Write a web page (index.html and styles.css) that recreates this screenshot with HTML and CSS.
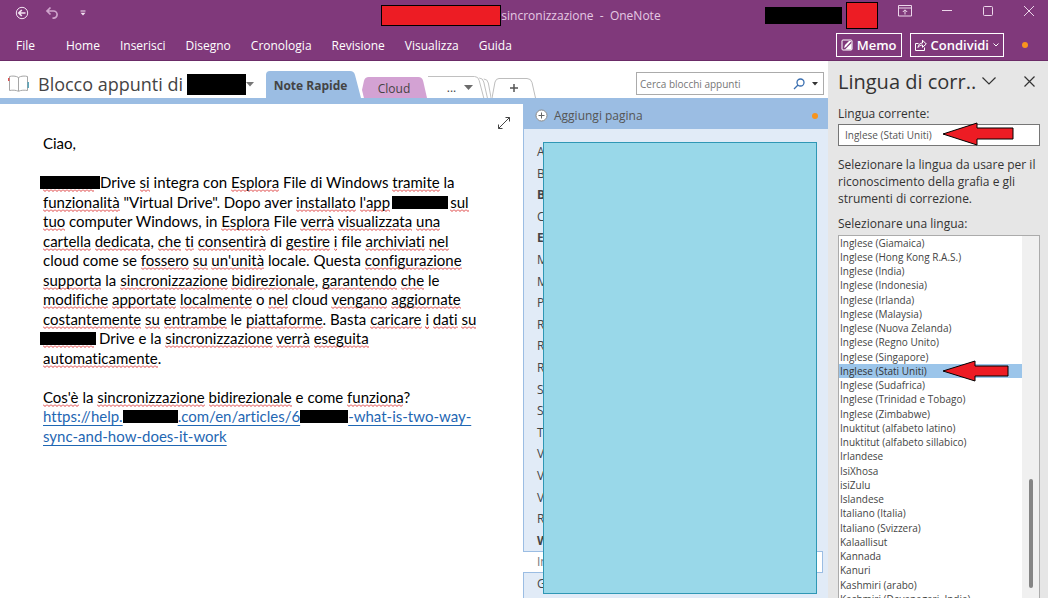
FILE: index.html
```
<!DOCTYPE html>
<html lang="it">

<head>
    <meta charset="UTF-8" />
    <meta name="viewport" content="width=device-width, initial-scale=1.0" />
    <title>sincronizzazione - OneNote</title>
    <link rel="stylesheet" href="styles.css">
</head>

<body>
    <header class="app-header">
        <div class="title-bar">
            <div class="quick-access">
                <button type="button" aria-label="Indietro">
                    <svg width="14" height="14" viewBox="0 0 14 14" fill="none" stroke="#f3e3f2">
                        <circle cx="7" cy="7" r="5.7" />
                        <path d="M10.5 7H4M6.8 4L3.8 7l3 3" stroke-width="1.7" />
                    </svg>
                </button>
                <button type="button" aria-label="Annulla">
                    <svg width="14" height="14" viewBox="0 0 14 14" fill="none" stroke="#cfa4cc" stroke-width="1.7">
                        <path d="M5.5 1.5L2 5l3.500 3.500M2 5h6.500a3.500 3.500 0 0 1 0 7.200H7.500" />
                    </svg>
                </button>
                <button type="button" aria-label="Personalizza">
                    <svg width="6" height="6" viewBox="0 0 6 6">
                        <path d="M.5 1h5" stroke="#f3e3f2" />
                        <path d="M.5 2.700h5L3 5.500z" fill="#f3e3f2" />
                    </svg>
                </button>
            </div>
            <div class="doc-title">
                <span class="mask-red"></span>
                <span>sincronizzazione&nbsp; - &nbsp;OneNote</span>
            </div>
            <div class="window-controls">
                <span class="mask-user"></span>
                <span class="mask-avatar"></span>
                <button type="button" aria-label="Barra multifunzione">
                    <svg width="14" height="12" viewBox="0 0 14 12" fill="none" stroke="#ecd6ea">
                        <path d="M.5.500h13v10.500H.500zM.500 3h13M7 9.500V5M4.800 7L7 4.800 9.200 7" />
                    </svg>
                </button>
                <button type="button" aria-label="Riduci">
                    <svg width="12" height="12" viewBox="0 0 12 12"><path d="M1 5.500h10" stroke="#ecd6ea" /></svg>
                </button>
                <button type="button" aria-label="Ingrandisci">
                    <svg width="12" height="12" viewBox="0 0 12 12"><rect x="1.500" y="1.500" width="9" height="9" rx="1" fill="none" stroke="#ecd6ea" /></svg>
                </button>
                <button type="button" aria-label="Chiudi">
                    <svg width="12" height="12" viewBox="0 0 12 12"><path d="M1 1l10 10M11 1L1 11" stroke="#ecd6ea" /></svg>
                </button>
            </div>
        </div>
        <div class="menu-bar">
            <nav>
                <a href="#">File</a>
                <a href="#">Home</a>
                <a href="#">Inserisci</a>
                <a href="#">Disegno</a>
                <a href="#">Cronologia</a>
                <a href="#">Revisione</a>
                <a href="#">Visualizza</a>
                <a href="#">Guida</a>
            </nav>
            <div class="actions">
                <button type="button" class="outline-btn">
                    <svg width="12" height="12" viewBox="0 0 12 12">
                        <rect x="1" y="1" width="10" height="10" rx="1" fill="none" stroke="#fff" />
                        <path d="M4 10.500L10.500 4v6.500zM3 9l1-3 4-4h2.500L5 8z" fill="#fff" />
                    </svg>
                    Memo
                </button>
                <button type="button" class="outline-btn">
                    <svg width="12" height="12" viewBox="0 0 12 12" fill="none" stroke="#fff">
                        <path d="M3.500 4.500h-3v7h9V8.500" />
                        <path d="M3 8.500c.3-3 2-4.500 4.500-4.500V1.200L11.300 5 7.500 8.300V6C5.500 6 4 6.800 3 8.500z" />
                    </svg>
                    Condividi
                    <svg width="6" height="6" viewBox="0 0 6 6"><path d="M.5 1.500L3 4l2.500-2.500" fill="none" stroke="#fff" /></svg>
                </button>
                <span class="dot"></span>
            </div>
        </div>
    </header>

    <div class="workspace">
        <div class="notebook">
            <div class="tab-row">
                <button type="button" class="notebook-name">
                    <svg width="21" height="18" viewBox="0 0 21 18" fill="none" stroke="#a6a6a6">
                        <path d="M10.500 2.500C8 .8 4 .8 1.500 1.500v14c3-.6 6.500-.4 9 .8 2.500-1.200 6-1.400 9-.8v-14c-2.500-.7-6.500-.7-9 1zM10.500 2.500v13.500" />
                        <path d="M.7 3v3" stroke="#e04f4f" stroke-width="1.400" />
                        <path d="M20.200 7v6" stroke="#4d9db5" stroke-width="1.400" />
                    </svg>
                    <span class="name">Blocco appunti di</span>
                    <span class="mask-name"></span>
                    <svg width="8" height="5" viewBox="0 0 8 5"><path d="M0 0h8L4 4.500z" fill="#767676" /></svg>
                </button>
                <div class="tabs">
                    <button type="button" class="tab tab-active">
                        <svg class="shape" viewBox="0 0 97 28" preserveAspectRatio="none"><path d="M1 28V5q0-4 4-4h80q4 0 5 4l6 23z" fill="#9bbde3" /></svg>
                        <span>Note Rapide</span>
                    </button>
                    <button type="button" class="tab tab-cloud">
                        <svg class="shape" viewBox="0 0 68 22" preserveAspectRatio="none"><path d="M2 22L0 14 2 5q1-4 5-4h51q4 0 5 4l4 17z" fill="#d3a2d3" /></svg>
                        <span>Cloud</span>
                    </button>
                    <button type="button" class="tab tab-more" aria-label="Altre sezioni">
                        <svg class="shape" viewBox="0 0 70 22" preserveAspectRatio="none" fill="none" stroke="#bdbdbd"><path d="M0 .5h51q4 0 5 4l5 17.500M56 2q4 0 5 4l4 16M61 3q4 0 5 4l3 15" /></svg>
                        <span>...</span>
                        <svg width="9" height="5" viewBox="0 0 9 5"><path d="M0 0h9L4.500 5z" fill="#6b6b6b" /></svg>
                    </button>
                    <button type="button" class="tab tab-add" aria-label="Nuova sezione">
                        <svg class="shape" viewBox="0 0 44 20" preserveAspectRatio="none" fill="none" stroke="#bdbdbd"><path d="M0 20L3 4q1-3.500 4-3.500h28q4 0 5 4l3.500 15.500" /></svg>
                        <svg width="8" height="8" viewBox="0 0 8 8"><path d="M4 0v8M0 4h8" stroke="#555" stroke-width="1.500" /></svg>
                    </button>
                </div>
                <div class="search">
                    <input type="text" placeholder="Cerca blocchi appunti" aria-label="Cerca blocchi appunti">
                    <svg width="12" height="12" viewBox="0 0 12 12" fill="none" stroke="#3a6fb0" stroke-width="1.300"><circle cx="7.500" cy="4.500" r="3.500" /><path d="M5 7L1 11" /></svg>
                    <svg width="6" height="4" viewBox="0 0 6 4"><path d="M0 0h6L3 3.500z" fill="#333" /></svg>
                </div>
            </div>

            <div class="content">
                <main class="page">
                    <button type="button" class="expand" aria-label="Schermo intero">
                        <svg width="14" height="14" viewBox="0 0 14 14" fill="none" stroke="#444"><path d="M1.500 12.500l11-11M8.500 1.500h4v4M1.500 8.500v4h4" /></svg>
                    </button>
                    <div class="note">
                        <div>Ciao,</div>
                        <div>&nbsp;</div>
                        <div><span class="mask mask-first"></span>Drive <u>si</u> integra con <u>Esplora</u> File di Windows <u>tramite</u> la</div>
                        <div><u>funzionalità</u> "Virtual Drive". Dopo aver <u>installato</u> <u>l'app</u><span class="mask mask-app"></span><u>sul</u></div>
                        <div><u>tuo</u> computer Windows, in <u>Esplora</u> File <u>verrà</u> <u>visualizzata</u> <u>una</u></div>
                        <div><u>cartella</u> <u>dedicata</u>, <u>che</u> <u>ti</u> <u>consentirà</u> di <u>gestire</u> <u>i</u> file <u>archiviati</u> <u>nel</u></div>
                        <div>cloud come se <u>fossero</u> <u>su</u> <u>un'unità</u> locale. Questa <u>configurazione</u></div>
                        <div><u>supporta</u> la <u>sincronizzazione</u> <u>bidirezionale</u>, <u>garantendo</u> <u>che</u> le</div>
                        <div><u>modifiche</u> <u>apportate</u> <u>localmente</u> o <u>nel</u> cloud <u>vengano</u> <u>aggiornate</u></div>
                        <div><u>costantemente</u> <u>su</u> <u>entrambe</u> le <u>piattaforme</u>. Basta <u>caricare</u> <u>i</u> <u>dati</u> <u>su</u></div>
                        <div><span class="mask mask-start"></span>Drive e la <u>sincronizzazione</u> <u>verrà</u> <u>eseguita</u></div>
                        <div><u>automaticamente</u>.</div>
                        <div>&nbsp;</div>
                        <div><u>Cos'è</u> la <u>sincronizzazione</u> <u>bidirezionale</u> e come <u>funziona</u>?</div>
                        <div><a href="#">https://help.<span class="mask mask-host"></span>.com/en/articles/6<span class="mask mask-id"></span>-what-is-two-way-</a></div>
                        <div><a href="#">sync-and-how-does-it-work</a></div>
                    </div>
                </main>

                <section class="pages">
                    <button type="button" class="add-page">
                        <svg width="13" height="13" viewBox="0 0 13 13"><circle cx="6.500" cy="6.500" r="5.500" fill="#fff" stroke="#8a8a8a" /><path d="M6.500 3.500v6M3.500 6.500h6" stroke="#666" /></svg>
                        <span>Aggiungi pagina</span>
                        <span class="dot"></span>
                    </button>
                    <ul>
                        <li>A</li>
                        <li>B</li>
                        <li class="bold">B</li>
                        <li>C</li>
                        <li class="bold">E</li>
                        <li>M</li>
                        <li>M</li>
                        <li>P</li>
                        <li>R</li>
                        <li>R</li>
                        <li>R</li>
                        <li>S</li>
                        <li>S</li>
                        <li>T</li>
                        <li>V</li>
                        <li>V</li>
                        <li>V</li>
                        <li>R</li>
                        <li class="bold">W</li>
                        <li class="current">In</li>
                        <li>G</li>
                    </ul>
                    <div class="cover"></div>
                </section>
            </div>
        </div>

        <aside class="language-pane">
            <div class="pane-head">
                <h2>Lingua di corr..</h2>
                <button type="button" aria-label="Opzioni riquadro">
                    <svg width="14" height="8" viewBox="0 0 14 8"><path d="M.5.500L7 7 13.500.500" fill="none" stroke="#333" stroke-width="1.200" /></svg>
                </button>
                <button type="button" aria-label="Chiudi riquadro">
                    <svg width="11" height="11" viewBox="0 0 11 11"><path d="M.5.500l10 10M10.500.500l-10 10" stroke="#333" stroke-width="1.200" /></svg>
                </button>
            </div>
            <label for="current-lang">Lingua corrente:</label>
            <div class="current-lang">
                <input type="text" id="current-lang" value="Inglese (Stati Uniti)" readonly>
                <svg class="arrow" width="72" height="24" viewBox="0 0 72 24"><path d="M1 12L35 1v5h36v11H35v6z" fill="#ed1c24" stroke="#000" /></svg>
            </div>
            <p>Selezionare la lingua da usare per il riconoscimento della grafia e gli strumenti di correzione.</p>
            <label for="lang-list">Selezionare una lingua:</label>
            <div class="lang-box">
                <select id="lang-list" size="26">
                    <option>Inglese (Giamaica)</option>
                    <option>Inglese (Hong Kong R.A.S.)</option>
                    <option>Inglese (India)</option>
                    <option>Inglese (Indonesia)</option>
                    <option>Inglese (Irlanda)</option>
                    <option>Inglese (Malaysia)</option>
                    <option>Inglese (Nuova Zelanda)</option>
                    <option>Inglese (Regno Unito)</option>
                    <option>Inglese (Singapore)</option>
                    <option selected>Inglese (Stati Uniti)</option>
                    <option>Inglese (Sudafrica)</option>
                    <option>Inglese (Trinidad e Tobago)</option>
                    <option>Inglese (Zimbabwe)</option>
                    <option>Inuktitut (alfabeto latino)</option>
                    <option>Inuktitut (alfabeto sillabico)</option>
                    <option>Irlandese</option>
                    <option>IsiXhosa</option>
                    <option>isiZulu</option>
                    <option>Islandese</option>
                    <option>Italiano (Italia)</option>
                    <option>Italiano (Svizzera)</option>
                    <option>Kalaallisut</option>
                    <option>Kannada</option>
                    <option>Kanuri</option>
                    <option>Kashmiri (arabo)</option>
                    <option>Kashmiri (Devanagari, India)</option>
                </select>
                <div class="scrollbar"><span></span></div>
                <svg class="arrow" width="68" height="22" viewBox="0 0 68 22"><path d="M1 11L33 1v5h33v10H33v5z" fill="#ed1c24" stroke="#000" /></svg>
            </div>
        </aside>
    </div>
</body>

</html>
```

FILE: styles.css
```
* {
    box-sizing: border-box;
}

body {
    margin: 0;
    height: 100vh;
    display: flex;
    flex-direction: column;
    overflow: hidden;
    font-family: "Open Sans", "Noto Sans", sans-serif;
    font-size: 12px;
    color: #444;
    background: #fff;
}

button {
    font: inherit;
    color: inherit;
    background: none;
    border: none;
    padding: 0;
    cursor: pointer;
}

svg {
    display: block;
    flex: none;
}

.dot {
    width: 6px;
    height: 6px;
    border-radius: 50%;
    background: #f7941d;
}

/* header */

.app-header {
    background: #80397b;
    color: #f3e3f2;
    border-bottom: 1px solid #6b2b67;
}

.title-bar {
    display: grid;
    grid-template-columns: 1fr auto 1fr;
    height: 30px;
}

.quick-access {
    display: flex;
    align-items: center;
    gap: 16px;
    padding: 0 0 4px 15px;
}

.quick-access button:last-child {
    margin-left: 5px;
}

.doc-title {
    display: flex;
    align-items: center;
    padding-right: 6px;
    color: #e5c9e3;
}

.mask-red {
    width: 120px;
    height: 21px;
    background: #ed1c24;
    border: 1px solid #000;
}

.window-controls {
    display: flex;
    justify-content: flex-end;
    align-items: center;
    padding-right: 13px;
}

.window-controls button {
    margin-left: 29px;
    padding-bottom: 8px;
}

.window-controls .mask-avatar + button {
    margin-left: 20px;
}

.mask-user {
    width: 77px;
    height: 17px;
    background: #000;
}

.mask-avatar {
    width: 32px;
    height: 27px;
    margin-left: 4px;
    background: #ed1c24;
    border: 1px solid #000;
}

.menu-bar {
    display: flex;
    justify-content: space-between;
    align-items: center;
    height: 30px;
    padding: 0 20px 0 16px;
}

.menu-bar nav {
    display: flex;
    gap: 20px;
}

.menu-bar nav a {
    color: #fff;
    text-decoration: none;
}

.menu-bar nav a:first-child {
    margin-right: 11px;
}

.actions {
    display: flex;
    align-items: center;
    gap: 8px;
}

.actions .dot {
    margin-left: 10px;
}

.outline-btn {
    display: flex;
    align-items: center;
    gap: 4px;
    height: 24px;
    padding: 0 4px;
    border: 1px solid #fff;
    color: #fff;
    font-size: 13px;
    font-weight: 600;
}

/* notebook */

.workspace {
    flex: 1;
    min-height: 0;
    display: flex;
}

.notebook {
    flex: 1;
    min-width: 0;
    display: flex;
    flex-direction: column;
}

.tab-row {
    display: flex;
    align-items: flex-end;
    height: 43px;
    border-bottom: 6px solid #9bbde3;
    padding-right: 4px;
}

.notebook-name {
    display: flex;
    align-items: center;
    height: 28px;
    padding-left: 8px;
}

.notebook-name .name {
    margin: 0 4px 0 9px;
    font-size: 18px;
    line-height: 28px;
}

.mask-name {
    width: 59px;
    height: 21px;
    background: #000;
}

.tabs {
    display: flex;
    align-items: flex-end;
    margin-left: 11px;
}

.tab {
    position: relative;
    display: flex;
    align-items: center;
    justify-content: center;
    height: 22px;
}

.tab .shape {
    position: absolute;
    inset: 0;
    width: 100%;
    height: 100%;
}

.tab span,
.tab .shape ~ svg {
    position: relative;
}

.tab-active {
    width: 97px;
    height: 28px;
    padding: 3px 6px 0 0;
    font-weight: 700;
}

.tab-cloud {
    width: 66px;
    padding: 2px 2px 0 0;
}

.tab-more {
    width: 64px;
    gap: 8px;
}

.tab-add {
    width: 44px;
    height: 20px;
}

.search {
    display: flex;
    align-items: center;
    gap: 7px;
    width: 188px;
    height: 23px;
    margin: 0 0 3px auto;
    padding: 0 5px 0 3px;
    border: 1px solid #ababab;
}

.search input {
    flex: 1;
    min-width: 0;
    padding: 0;
    border: none;
    outline: none;
    font: 10px "Open Sans", sans-serif;
}

.search input::placeholder {
    color: #767676;
}

.content {
    flex: 1;
    min-height: 0;
    display: flex;
}

.page {
    position: relative;
    flex: 1;
    min-width: 0;
    padding: 30px 0 0 43px;
}

.expand {
    position: absolute;
    top: 12px;
    right: 12px;
}

.note {
    font-family: Lato, "Liberation Sans", sans-serif;
    font-size: 15px;
    line-height: 19px;
    font-variant-ligatures: none;
    color: #000;
    white-space: nowrap;
}

/* one pixel more on every other line */
.note div:nth-child(odd) {
    height: 20px;
}

.note div:nth-child(even) {
    height: 19px;
}

/* tight spelling squiggle */
.note u,
.mask-first::after,
.mask-start::after {
    background: url("data:image/svg+xml,%3Csvg xmlns='http://www.w3.org/2000/svg' width='4' height='3'%3E%3Cpath d='M0 .5L2 2.500L4 .5' fill='none' stroke='%23dc3c3c'/%3E%3C/svg%3E") repeat-x left bottom;
}

.note u {
    text-decoration: none;
    padding-bottom: 1px;
}

.note a {
    color: #1f67b3;
    text-underline-offset: 3px;
    text-decoration-skip-ink: none;
}

.mask {
    position: relative;
    display: inline-block;
    height: 13px;
    background: #000;
    vertical-align: -1px;
}

.mask-first::after,
.mask-start::after {
    content: "";
    position: absolute;
    left: 3px;
    top: 100%;
    width: 51px;
    height: 3px;
}

.mask-first {
    width: 60px;
    margin-left: -3px;
}

.mask-start {
    width: 56px;
    margin: 0 3px 0 -3px;
}

.mask-app {
    width: 56px;
    margin: 0 2px;
}

.mask-host {
    width: 55px;
}

.mask-id {
    width: 48px;
}

/* page list */

.pages {
    position: relative;
    width: 305px;
    border-left: 1px solid #9bbde3;
    background: #e1ebf7;
}

.add-page {
    display: flex;
    align-items: center;
    gap: 6px;
    width: 100%;
    height: 25px;
    padding: 0 10px 2px 11px;
    background: #9bbde3;
    color: #555;
}

.add-page .dot {
    margin-left: auto;
}

.pages ul {
    list-style: none;
    margin: 0;
    padding: 12px 5px 0 0;
}

.pages li {
    height: 22px;
    padding-left: 13px;
    line-height: 21px;
}

.pages li:nth-child(5n + 2),
.pages li:nth-child(5n + 4) {
    height: 21px;
}

.pages .bold {
    font-weight: 700;
}

.pages .current {
    margin-left: -1px;
    padding-left: 14px;
    background: #fff;
    border: 1px solid #9bbde3;
    border-left: none;
    color: #777;
    line-height: 20px;
}

.cover {
    position: absolute;
    inset: 38px 11px 4px 19px;
    background: #99d8e9;
    border: 1px solid #2f97b5;
}

/* language pane */

.language-pane {
    width: 220px;
    display: flex;
    flex-direction: column;
    padding: 0 8px 0 10px;
    background: #e6e6e6;
    color: #333;
}

.pane-head {
    display: flex;
    align-items: center;
    height: 40px;
    padding-right: 5px;
}

.pane-head h2 {
    flex: 1;
    margin: 0;
    font-size: 20px;
    font-weight: 400;
    white-space: nowrap;
}

.pane-head button {
    margin-left: 28px;
}

.pane-head h2 + button {
    margin-left: 0;
}

.language-pane label {
    line-height: 17px;
    margin-top: 4px;
}

.current-lang {
    position: relative;
    margin-top: 2px;
}

.current-lang input {
    display: block;
    width: 100%;
    height: 22px;
    padding: 0 6px;
    border: 1px solid #767676;
    background: #fff;
    color: #555;
    font: 10px "Open Sans", sans-serif;
}

.arrow {
    position: absolute;
}

.current-lang .arrow {
    top: -2px;
    left: 104px;
}

.language-pane p {
    margin: 10px 0 4px;
    line-height: 17px;
}

.lang-box {
    position: relative;
    flex: 1;
    min-height: 0;
    display: flex;
    margin-top: 3px;
    border: 1px solid #ababab;
    border-bottom: none;
    background: #fff;
    overflow: hidden;
}

.lang-box select {
    flex: 1;
    min-width: 0;
    height: 400px;
    padding: 0;
    border: none;
    outline: none;
    overflow: hidden;
    background: #fff;
    color: #444;
    font: 10px "Open Sans", sans-serif;
}

.lang-box option {
    height: 14px;
    min-height: 14px;
    padding: 0 1px;
    line-height: 14px;
}

.lang-box option:nth-child(4n) {
    height: 15px;
}

.lang-box option:checked {
    background: #9bc5ea linear-gradient(#9bc5ea, #9bc5ea);
    color: #333;
}

.scrollbar {
    width: 17px;
    background: #f0f0f0;
    padding: 243px 6px 10px 7px;
}

.scrollbar span {
    display: block;
    height: 100%;
    border-radius: 2px;
    background: #858585;
}

.lang-box .arrow {
    top: 124px;
    left: 103px;
}
```
